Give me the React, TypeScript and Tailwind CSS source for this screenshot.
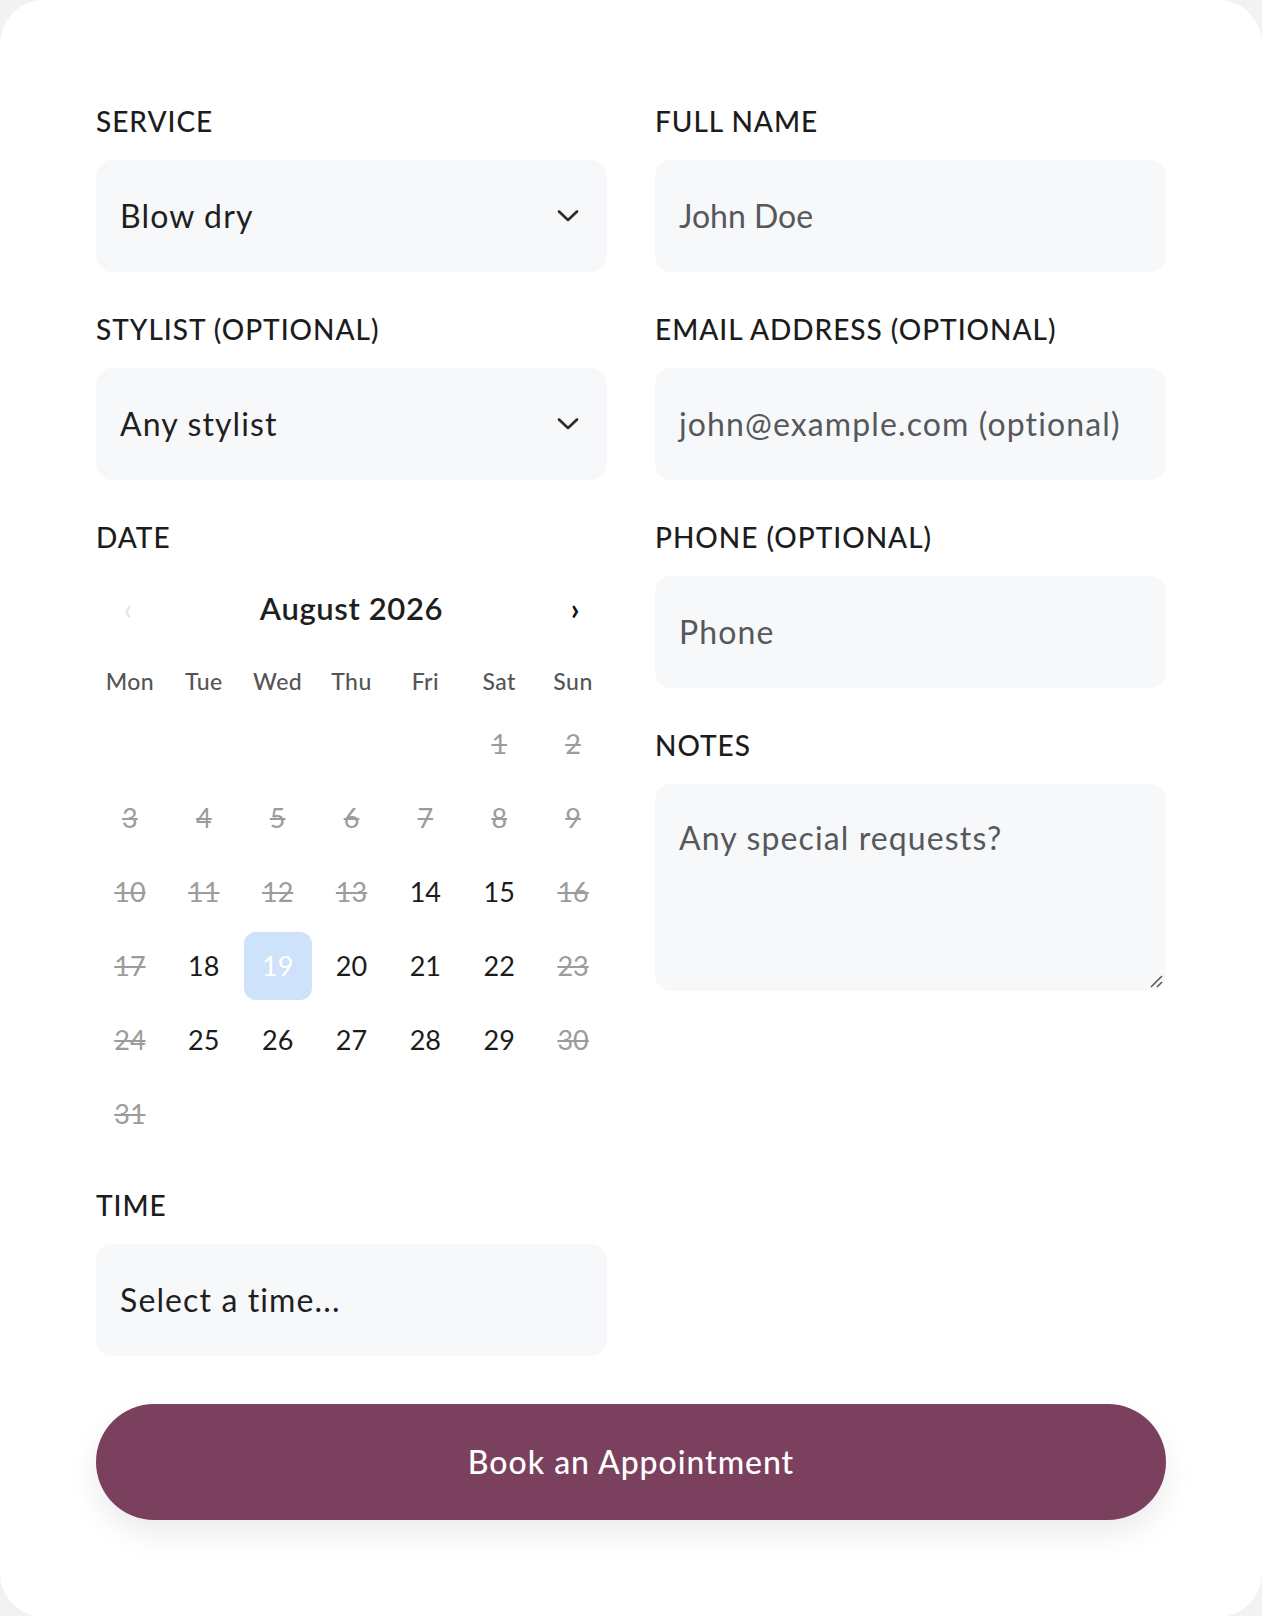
import React from "react";

const FONT = { fontFamily: "Lato, 'Noto Sans', sans-serif" };

function Chevron() {
  return (
    <svg width="22" height="14" viewBox="0 0 22 14" fill="none" className="shrink-0">
      <path d="M2 2.5 L11 11 L20 2.5" stroke="#2b2b2b" strokeWidth="2.6" strokeLinecap="round" strokeLinejoin="round" />
    </svg>
  );
}

function Label({ children }: { children: React.ReactNode }) {
  return (
    <div className="mb-[21px] pt-[2px] text-[28px] leading-[36px] font-medium text-[#1c1c1c] tracking-[0.035em]">{children}</div>
  );
}

function SelectBox({ value, chevron = true }: { value: string; chevron?: boolean }) {
  return (
    <div className="flex h-[112px] items-center justify-between rounded-2xl bg-[#f7f8fa] pl-[24px] pr-[28px]">
      <span className="text-[32px] text-[#1f1f1f] tracking-[0.035em]">{value}</span>
      {chevron && <Chevron />}
    </div>
  );
}

function InputBox({ placeholder, tight = false }: { placeholder: string; tight?: boolean }) {
  return (
    <div className="flex h-[112px] items-center rounded-2xl bg-[#f7f8fa] px-[24px]">
      <span className={tight ? "text-[32px] text-[#56585c] tracking-[0em]" : "text-[32px] text-[#56585c] tracking-[0.035em]"}>{placeholder}</span>
    </div>
  );
}

const weekdays = ["Mon", "Tue", "Wed", "Thu", "Fri", "Sat", "Sun"];
const enabled = new Set([14, 15, 18, 19, 20, 21, 22, 25, 26, 27, 28, 29]);

function Calendar() {
  const cells: (number | null)[] = [null, null, null, null, null];
  for (let d = 1; d <= 31; d++) cells.push(d);
  return (
    <div>
      <div className="flex h-[64px] items-center justify-between">
        <div className="flex h-[64px] w-[64px] items-center justify-center text-[30px] text-[#e3e3e3]">‹</div>
        <div className="text-[31px] font-semibold text-[#1e1e1e] tracking-[0.02em]">August 2026</div>
        <div className="flex h-[64px] w-[64px] items-center justify-center text-[30px] font-bold text-[#111]">›</div>
      </div>
      <div className="mt-[24px] grid h-[32px] grid-cols-7 gap-[6px]">
        {weekdays.map((w) => (
          <div key={w} className="flex items-center justify-center text-[23px] font-medium text-[#555] tracking-[0.02em]">{w}</div>
        ))}
      </div>
      <div className="mt-[14px] grid grid-cols-7 gap-[6px]">
        {cells.map((d, i) => {
          if (d === null) return <div key={i} className="h-[68px]" />;
          const sel = d === 19;
          const en = enabled.has(d);
          return (
            <div
              key={i}
              className={
                sel
                  ? "flex h-[68px] items-center justify-center rounded-[12px] bg-[#cfe2fc] text-[27px] text-white"
                  : en
                  ? "flex h-[68px] items-center justify-center text-[27px] text-[#1c1c1c]"
                  : "flex h-[68px] items-center justify-center text-[27px] text-[#9c9c9c] line-through decoration-[2px]"
              }
            >
              {d}
            </div>
          );
        })}
      </div>
    </div>
  );
}

export default function App() {
  return (
    <div className="min-h-[1616px] w-full bg-[#f2f2f2]" style={FONT}>
      <div className="min-h-[1616px] rounded-[44px] bg-white px-[96px] pb-[97px] pt-[101px]">
        <div className="grid grid-cols-2 gap-x-[48px]">
          <div className="flex flex-col gap-[37px]">
            <div>
              <Label>SERVICE</Label>
              <SelectBox value="Blow dry" />
            </div>
            <div>
              <Label>STYLIST (OPTIONAL)</Label>
              <SelectBox value="Any stylist" />
            </div>
            <div>
              <div className="pt-[2px] text-[28px] leading-[36px] font-medium text-[#1c1c1c] tracking-[0.035em]">DATE</div>
              <div className="mt-[21px]">
                <Calendar />
              </div>
            </div>
            <div>
              <Label>TIME</Label>
              <SelectBox value="Select a time..." chevron={false} />
            </div>
          </div>
          <div className="flex flex-col gap-[37px]">
            <div>
              <Label>FULL NAME</Label>
              <InputBox placeholder="John Doe" tight />
            </div>
            <div>
              <Label>EMAIL ADDRESS (OPTIONAL)</Label>
              <InputBox placeholder="john@example.com (optional)" />
            </div>
            <div>
              <Label>PHONE (OPTIONAL)</Label>
              <InputBox placeholder="Phone" />
            </div>
            <div>
              <Label>NOTES</Label>
              <div className="relative h-[207px] rounded-2xl bg-[#f7f8fa] px-[24px] pt-[30px]">
                <span className="text-[32px] text-[#56585c] tracking-[0.035em]">Any special requests?</span>
                <svg width="14" height="14" viewBox="0 0 14 14" className="absolute bottom-[3px] right-[3px]">
                  <path d="M2 13 L13 2 M8 13 L13 8" stroke="#555" strokeWidth="1.5" />
                </svg>
              </div>
            </div>
          </div>
        </div>
        <button className="mt-[48px] flex h-[116px] w-full items-center justify-center rounded-full bg-[#7b405d] text-[32px] font-medium text-white shadow-[0_14px_30px_rgba(0,0,0,0.08)] tracking-[0.03em]">
          Book an Appointment
        </button>
      </div>
    </div>
  );
}
